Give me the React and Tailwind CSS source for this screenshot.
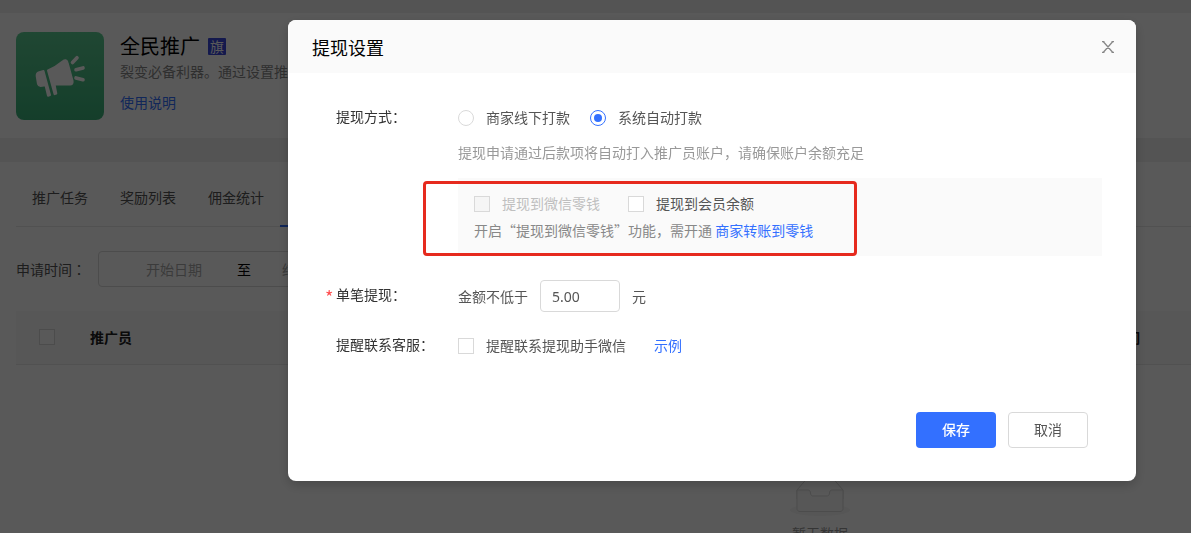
import React from "react";

const CJK = "font-['Noto_Sans_CJK_SC','Noto_Sans',sans-serif]";

function Megaphone() {
  return (
    <svg viewBox="0 0 88 88" className="size-[88px] shrink-0" aria-hidden="true">
      <defs>
        <linearGradient id="promo" x1="0" y1="0" x2="0" y2="1">
          <stop offset="0" stopColor="#5ccb92" />
          <stop offset="1" stopColor="#3bb27a" />
        </linearGradient>
      </defs>
      <rect width="88" height="88" rx="8" fill="url(#promo)" />
      <g fill="#fff" stroke="#fff" strokeLinejoin="round" strokeLinecap="round" strokeWidth="2">
        <path d="M22.500 40.500 27.500 39 34 63 32 63.700 29.500 53.200 24.500 54Q22.600 54 22 52L20.700 44Q20.500 41.300 22.500 40.500Z" />
        <path d="M32 38.500Q40 35 46.500 29.500 50.500 26.500 51.500 30.500L56.600 49Q57 53 53.500 52.500L38.500 52.500 40.300 61.500 38.600 62.200Z" />
        <path d="M56.500 30.500 61 25.700M60 37.700 67 35.900M60 45.900 67 47.700" fill="none" strokeWidth="3.600" />
      </g>
    </svg>
  );
}

function EmptyBox() {
  return (
    <svg viewBox="0 0 64 41" className="h-[41px] w-16" fill="none" aria-hidden="true">
      <ellipse cx="32" cy="33" rx="30" ry="6" fill="#f5f5f5" />
      <path d="M55 13 45 1.500Q44 0.500 42.500 0.500H21.500Q20 0.500 19 1.500L9 13V22H55Z" fill="#fff" stroke="#d9d9d9" />
      <path d="M41.500 16C41.500 14.400 42.500 13 43.800 13H55V31.500C55 33 54 34.500 52 34.500H12C10 34.500 9 33 9 31.500V13H20.200C21.500 13 22.500 14.400 22.500 16C22.500 17.600 23.500 19 24.800 19H39.200C40.500 19 41.500 17.600 41.500 16Z" fill="#fafafa" stroke="#d9d9d9" />
    </svg>
  );
}

function Check({ id, children, disabled }) {
  return (
    <label htmlFor={id} className={disabled ? "flex items-center gap-3 text-[#bfbfbf]" : "flex items-center gap-3 text-[#555]"}>
      <input
        id={id}
        type="checkbox"
        disabled={disabled}
        className="size-4 appearance-none border border-[#d9d9d9] bg-white checked:bg-[#3370ff] disabled:bg-[#f5f5f5]"
      />
      <span className="pb-0.5 leading-5">{children}</span>
    </label>
  );
}

function Radio({ id, children, defaultChecked }) {
  return (
    <label htmlFor={id} className="flex items-center gap-3 text-[#555]">
      <input
        id={id}
        type="radio"
        name="method"
        defaultChecked={defaultChecked}
        className="grid size-4 appearance-none place-items-center rounded-full border border-[#d9d9d9] bg-white before:size-2 before:rounded-full checked:border-[#3370ff] checked:before:bg-[#3370ff]"
      />
      <span className="pb-0.5 leading-5">{children}</span>
    </label>
  );
}

function Row({ label, required, className, children }) {
  return (
    <div className={"flex items-start " + (className || "")}>
      <div className="w-[134px] shrink-0 pl-3 text-[#333]">
        <div className="-ml-3 flex leading-7">
          <span className="w-3 pt-0.5 pl-px text-lg leading-7 text-[#ff4d4f]">{required ? "*" : ""}</span>
          {label}：
        </div>
      </div>
      <div className="min-w-0 flex-1">{children}</div>
    </div>
  );
}

function Page() {
  return (
    <div className="min-w-[1640px] pt-[13px]">
      <header className="flex gap-4 bg-white px-4 pt-[19px] pb-[18px]">
        <Megaphone />
        <div>
          <div className="flex items-center gap-2">
            <h1 className="text-[20px] leading-7 text-black">全民推广</h1>
            <span className="flex h-[17px] w-[18px] items-center justify-center rounded-[1px] bg-[#3a49dc] text-sm text-white">旗</span>
          </div>
          <p className="mt-px leading-5 text-[#888]">裂变必备利器。通过设置推广</p>
          <a href="#help" className="mt-[11px] block leading-5 text-[#3370ff]">使用说明</a>
        </div>
      </header>

      <main className="mt-6 min-h-screen bg-white px-4">
        <nav className="flex border-b border-[#e8e8e8] pt-3">
          {["推广任务", "奖励列表", "佣金统计"].map((t) => (
            <a key={t} href="#tab" className="px-4 pt-3 pb-[18px] leading-[22px] text-[#555]">{t}</a>
          ))}
          <a href="#tab" className="-mb-px border-b-2 border-[#3370ff] px-4 pt-3 leading-[22px] text-[#3370ff]">提现</a>
        </nav>

        <div className="mt-6 flex h-9 items-center">
          <div className="w-[82px] text-[#555]">
            申请时间<span className="font-['Noto_Sans_CJK_TC',sans-serif]" lang="zh-TW">：</span>
          </div>
          <div className="flex h-9 items-center rounded border border-[#d9d9d9]">
            <input aria-label="开始日期" placeholder="开始日期" className="w-[138px] bg-transparent pl-3 text-center placeholder:text-[#aaa]" />
            <span className="text-black">至</span>
            <input aria-label="结束日期" placeholder="结束日期" className="w-[118px] bg-transparent text-center placeholder:text-[#aaa]" />
          </div>
        </div>

        <table className="mt-6 w-full text-left">
          <thead>
            <tr className="h-[53px] border-b border-[#e8e8e8] bg-[#fafafa]">
              <th className="w-[74px] pl-[23px]">
                <input type="checkbox" aria-label="全选" className="block size-4 appearance-none border border-[#d9d9d9] bg-white" />
              </th>
              <th className="w-[1022px] font-bold text-[#222]">推广员</th>
              <th className="font-bold text-[#222]">时间</th>
            </tr>
          </thead>
        </table>
        <div className="flex flex-col items-center gap-1 pt-28 text-[#999]">
          <EmptyBox />
          <p className="leading-[22px]">暂无数据</p>
        </div>
      </main>
    </div>
  );
}

function Dialog() {
  return (
    <section role="dialog" aria-label="提现设置" className="w-[848px] self-start overflow-hidden rounded-lg bg-white shadow-[0_4px_12px_rgba(0,0,0,0.2)]">
      <header className="flex h-[53px] items-center justify-between bg-[#fafafa] pr-[22px] pl-6">
        <h2 className="text-lg text-black">提现设置</h2>
        <button aria-label="关闭" className="text-[#888]">
          <svg viewBox="0 0 12 12" className="size-3" fill="none" stroke="currentColor" strokeWidth="1.400">
            <path d="M1 0.300 11 11.700M11 0.300 1 11.700M0 0.500H2.500M9.500 0.500H12M0 11.500H2.500M9.500 11.500H12" />
          </svg>
        </button>
      </header>

      <form className="pt-[29px] pr-[34px] pb-[33px] pl-9">
        <Row label="提现方式">
          <div className="flex h-8 items-center gap-5">
            <Radio id="offline">商家线下打款</Radio>
            <Radio id="auto" defaultChecked>系统自动打款</Radio>
          </div>
          <p className="mt-[7px] leading-[22px] text-[#999]">提现申请通过后款项将自动打入推广员账户，请确保账户余额充足</p>
          <div className="relative mt-[15px] bg-[#fafafa] px-4 py-[15px]">
            <div className="flex h-[22px] items-center gap-7">
              <Check id="wechat" disabled>提现到微信零钱</Check>
              <Check id="balance">提现到会员余额</Check>
            </div>
            <p className="mt-1 leading-[22px] text-[#888]">
              开启“提现到微信零钱”功能，需开通 <a href="#transfer" className="text-[#3370ff]">商家转账到零钱</a>
            </p>
            <div className="pointer-events-none absolute top-[3px] bottom-0 -left-[35px] w-[434px] rounded border-[3px] border-[#e62a1e]" />
          </div>
        </Row>

        <Row label="单笔提现" required className="mt-6">
          <div className="flex h-8 items-center gap-3 text-[#555]">
            <label htmlFor="amount">金额不低于</label>
            <input id="amount" defaultValue="5.00" className="h-8 w-20 rounded border border-[#d9d9d9] px-[11px] font-['Noto_Sans',sans-serif]" />
            <span>元</span>
          </div>
        </Row>

        <Row label="提醒联系客服" className="mt-[18px]">
          <div className="flex h-8 items-center gap-7">
            <Check id="helper">提醒联系提现助手微信</Check>
            <a href="#example" className="pb-0.5 leading-5 text-[#3370ff]">示例</a>
          </div>
        </Row>

        <div className="mt-[50px] mr-3.5 flex justify-end gap-3">
          <button type="button" className="h-9 w-20 rounded bg-[#3370ff] pb-0.5 font-medium text-white">保存</button>
          <button type="button" className="h-9 w-20 rounded border border-[#d9d9d9] bg-white pb-0.5 text-[#555]">取消</button>
        </div>
      </form>
    </section>
  );
}

export default function App() {
  return (
    <div lang="zh-CN" className={"h-screen overflow-hidden bg-[#f0f0f0] text-sm " + CJK}>
      <Page />
      <div className="fixed inset-0 flex bg-black/65 pt-5 pl-72">
        <Dialog />
      </div>
    </div>
  );
}
